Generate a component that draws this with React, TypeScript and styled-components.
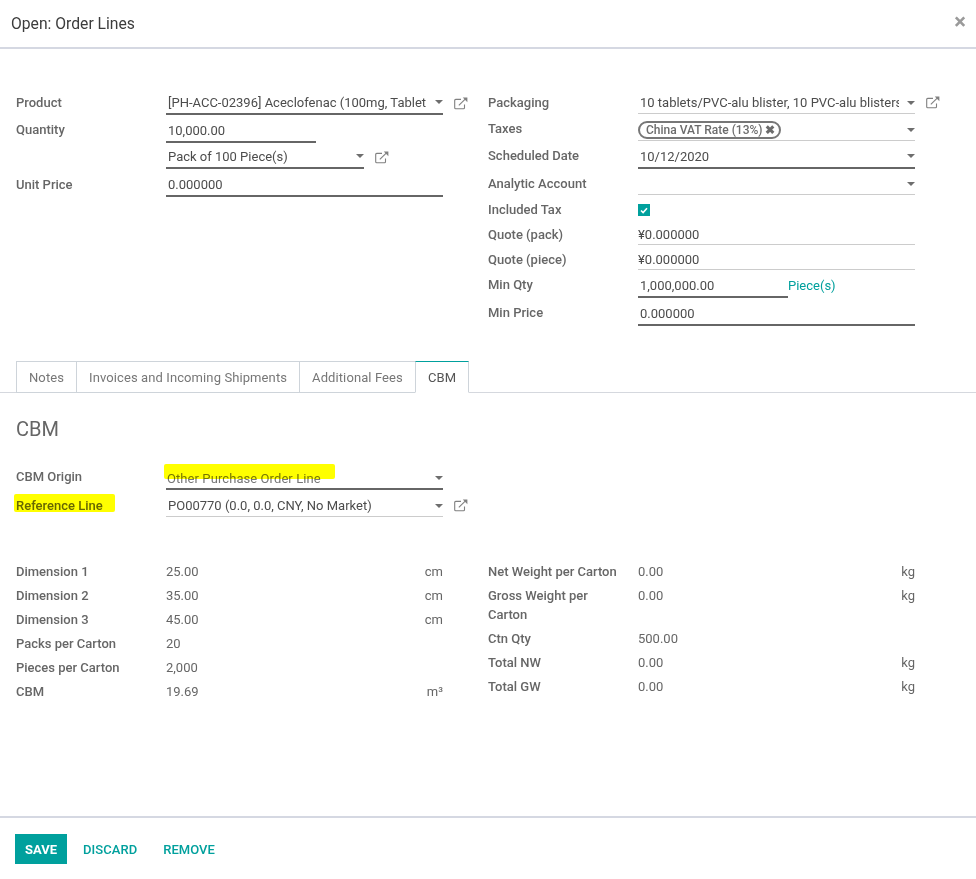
import React from 'react';
import styled, { createGlobalStyle } from 'styled-components';

const GlobalStyle = createGlobalStyle`
  html, body {
    margin: 0;
    padding: 0;
    background: #fff;
  }
  body {
    font-family: Roboto, 'Noto Sans', sans-serif;
    font-size: 13px;
    color: #666;
  }
`;

const Dialog = styled.div`
  width: 976px;
  height: 879px;
  display: flex;
  flex-direction: column;
  overflow: hidden;
`;

const Header = styled.header`
  height: 49px;
  flex-shrink: 0;
  box-sizing: border-box;
  display: flex;
  align-items: center;
  justify-content: space-between;
  padding: 0 10px 0 11px;
  border-bottom: 2px solid #d5d8e2;
`;

const Title = styled.h4`
  margin: 0;
  font-size: 15.7px;
  font-weight: 400;
  color: #3c3c3c;
`;

const Close = styled.span`
  font-size: 22px;
  font-weight: 700;
  line-height: 1;
  margin-bottom: 3px;
  color: #9a9a9a;
`;

const Body = styled.div`
  flex: 1;
  display: flex;
  flex-direction: column;
`;

const Columns = styled.div<{ $top: number; $height: number }>`
  display: grid;
  grid-template-columns: 427px 427px;
  column-gap: 45px;
  padding: ${(p) => p.$top}px 0 0 16px;
  height: ${(p) => p.$height}px;
  box-sizing: border-box;
  align-items: start;
`;

const Group = styled.div`
  display: flex;
  flex-direction: column;
`;

const Row = styled.div<{ $h: number }>`
  height: ${(p) => p.$h}px;
  display: grid;
  grid-template-columns: 150px 277px;
  align-items: end;
`;

const Label = styled.label<{ $lift?: number }>`
  font-weight: 500;
  line-height: 18px;
  margin-bottom: ${(p) => p.$lift ?? 4}px;
  color: #666;
  position: relative;
`;

const FieldCell = styled.div<{ $width?: number }>`
  position: relative;
  width: ${(p) => (p.$width ? `${p.$width}px` : '100%')};
  display: flex;
  align-items: flex-end;
`;

const Field = styled.div<{ $strong?: boolean; $inset?: number }>`
  width: 100%;
  height: 22px;
  box-sizing: border-box;
  display: flex;
  align-items: center;
  padding: 0 0 ${(p) => (p.$strong ? 2 : 0)}px ${(p) => p.$inset ?? 2}px;
  border-bottom: ${(p) => (p.$strong ? '2px solid #666' : '1px solid #ccc')};
  color: #4c4c4c;
  white-space: nowrap;
  overflow: hidden;
`;

const AmountField = styled(Field)`
  padding-top: 2px;
`;

const OriginField = styled(Field)`
  padding-top: 2px;
  color: #777;
  letter-spacing: 0.08px;
`;

const FieldText = styled.span`
  flex: 1;
  overflow: hidden;
  min-width: 0;
`;

const Caret = styled.span`
  width: 0;
  height: 0;
  flex-shrink: 0;
  margin-left: 8px;
  border-left: 4px solid transparent;
  border-right: 4px solid transparent;
  border-top: 4px solid #6e6e6e;
`;

const OpenLink = styled.svg`
  position: absolute;
  left: 100%;
  bottom: 5px;
  margin-left: 11px;
  width: 14px;
  height: 13px;
  color: #808080;
`;

const Tag = styled.span`
  display: inline-flex;
  align-items: center;
  gap: 2px;
  height: 18px;
  box-sizing: border-box;
  padding: 0 4px 0 6px;
  border: 2px solid #777;
  border-radius: 9px;
  font-size: 12px;
  font-weight: 500;
  color: #6c6c6c;
`;

const TagRemove = styled.span`
  font-size: 12px;
  line-height: 1;
  font-weight: 700;
`;

const CheckCell = styled.div`
  height: 22px;
  display: flex;
  align-items: center;
`;

const Check = styled.span`
  width: 12px;
  height: 12px;
  margin-top: 2px;
  background: #00a09d;
  display: flex;
  align-items: center;
  justify-content: center;
`;

const UnitLink = styled.span`
  position: absolute;
  left: 150px;
  bottom: 5px;
  color: #00a09d;
`;

const TabBar = styled.div`
  display: flex;
  height: 32px;
  flex-shrink: 0;
  box-sizing: border-box;
  padding-left: 16px;
  border-bottom: 1px solid #d5d8de;
`;

const Tab = styled.div<{ $active?: boolean }>`
  height: 32px;
  box-sizing: border-box;
  padding: 0 12px;
  display: flex;
  align-items: center;
  letter-spacing: 0.1px;
  border: 1px solid #ced4da;
  margin-left: -1px;
  border-top-color: ${(p) => (p.$active ? '#00a09d' : '#ced4da')};
  border-bottom-color: ${(p) => (p.$active ? '#fff' : '#ced4da')};
  background: #fff;
  color: ${(p) => (p.$active ? '#555' : '#777')};
  &:first-child {
    margin-left: 0;
  }
`;

const SectionTitle = styled.h3`
  margin: 24px 0 0 16px;
  font-size: 20px;
  line-height: 24px;
  font-weight: 400;
  color: #666;
`;

const ReferenceGroup = styled(Group)`
  padding: 24px 0 0 16px;
  width: 427px;
`;

const Highlight = styled.span<{ $l: number; $t: number; $w: number; $h: number }>`
  position: absolute;
  left: ${(p) => p.$l}px;
  top: ${(p) => p.$t}px;
  width: ${(p) => p.$w}px;
  height: ${(p) => p.$h}px;
  background: #ffff00;
  mix-blend-mode: multiply;
  pointer-events: none;
  border-radius: 2px;
`;

const ReadRow = styled.div`
  min-height: 24px;
  display: grid;
  grid-template-columns: 150px 1fr auto;
  align-items: start;
`;

const ReadLabel = styled.span`
  font-weight: 500;
  line-height: 19px;
  padding: 2px 16px 3px 0;
  color: #666;
`;

const ReadValue = styled.span`
  line-height: 19px;
  padding-top: 2px;
  color: #666;
`;

const Footer = styled.footer`
  margin-top: auto;
  height: 63px;
  flex-shrink: 0;
  box-sizing: border-box;
  display: flex;
  align-items: flex-start;
  padding: 16px 0 0 15px;
  border-top: 2px solid #d5d8e2;
`;

const SaveButton = styled.button`
  width: 52px;
  height: 30px;
  border: 0;
  padding: 0;
  background: #00a09d;
  color: #fff;
  font: 700 13px Roboto, sans-serif;
`;

const LinkButton = styled.button`
  height: 30px;
  border: 0;
  padding: 0;
  margin: 0 10px 0 16px;
  background: none;
  color: #00a09d;
  letter-spacing: 0.05px;
  font: 500 13px Roboto, sans-serif;
`;

const ExternalIcon = () => (
  <OpenLink viewBox="0 0 14 13" fill="none" stroke="currentColor" strokeWidth="1.1">
    <path d="M10.5 7.5v3.2a1 1 0 0 1-1 1H1.7a1 1 0 0 1-1-1V3.4a1 1 0 0 1 1-1H7" />
    <path d="M4.8 8.4 12 1.4" />
    <path d="M8.8.6h4.6v4.6z" fill="currentColor" stroke="none" />
  </OpenLink>
);

const leftDetails = [
  ['Dimension 1', '25.00', 'cm'],
  ['Dimension 2', '35.00', 'cm'],
  ['Dimension 3', '45.00', 'cm'],
  ['Packs per Carton', '20', ''],
  ['Pieces per Carton', '2,000', ''],
  ['CBM', '19.69', 'm³'],
];

const rightDetails = [
  ['Net Weight per Carton', '0.00', 'kg'],
  ['Gross Weight per Carton', '0.00', 'kg'],
  ['Ctn Qty', '500.00', ''],
  ['Total NW', '0.00', 'kg'],
  ['Total GW', '0.00', 'kg'],
];

const App: React.FC = () => (
  <Dialog>
    <GlobalStyle />
    <Header>
      <Title>Open: Order Lines</Title>
      <Close>×</Close>
    </Header>
    <Body>
      <Columns $top={21} $height={312}>
        <Group>
          <Row $h={45}>
            <Label $lift={3}>Product</Label>
            <FieldCell>
              <Field $strong>
                <FieldText>[PH-ACC-02396] Aceclofenac (100mg, Tablet</FieldText>
                <Caret />
              </Field>
              <ExternalIcon />
            </FieldCell>
          </Row>
          <Row $h={28}>
            <Label>Quantity</Label>
            <FieldCell $width={150}>
              <Field $strong>10,000.00</Field>
            </FieldCell>
          </Row>
          <Row $h={26}>
            <span />
            <FieldCell $width={198}>
              <Field $strong>
                <FieldText>Pack of 100 Piece(s)</FieldText>
                <Caret />
              </Field>
              <ExternalIcon />
            </FieldCell>
          </Row>
          <Row $h={28}>
            <Label $lift={3}>Unit Price</Label>
            <FieldCell>
              <Field $strong>0.000000</Field>
            </FieldCell>
          </Row>
        </Group>
        <Group>
          <Row $h={44}>
            <Label $lift={2}>Packaging</Label>
            <FieldCell>
              <Field>
                <FieldText>10 tablets/PVC-alu blister, 10 PVC-alu blisters/box</FieldText>
                <Caret />
              </Field>
              <ExternalIcon />
            </FieldCell>
          </Row>
          <Row $h={27}>
            <Label $lift={3}>Taxes</Label>
            <FieldCell>
              <Field $inset={0}>
                <FieldText>
                  <Tag>
                    China VAT Rate (13%) <TagRemove>✖</TagRemove>
                  </Tag>
                </FieldText>
                <Caret />
              </Field>
            </FieldCell>
          </Row>
          <Row $h={28}>
            <Label>Scheduled Date</Label>
            <FieldCell>
              <Field $strong>
                <FieldText>10/12/2020</FieldText>
                <Caret />
              </Field>
            </FieldCell>
          </Row>
          <Row $h={26}>
            <Label $lift={2}>Analytic Account</Label>
            <FieldCell>
              <Field>
                <FieldText />
                <Caret />
              </Field>
            </FieldCell>
          </Row>
          <Row $h={25}>
            <Label $lift={1}>Included Tax</Label>
            <CheckCell>
              <Check>
                <svg width="8" height="7" viewBox="0 0 8 7" fill="none" stroke="#fff" strokeWidth="1.6">
                  <path d="M1 3.5 3.1 5.5 7 1.2" />
                </svg>
              </Check>
            </CheckCell>
          </Row>
          <Row $h={25}>
            <Label $lift={1}>Quote (pack)</Label>
            <FieldCell>
              <AmountField $inset={0}>¥0.000000</AmountField>
            </FieldCell>
          </Row>
          <Row $h={25}>
            <Label $lift={1}>Quote (piece)</Label>
            <FieldCell>
              <AmountField $inset={0}>¥0.000000</AmountField>
            </FieldCell>
          </Row>
          <Row $h={28}>
            <Label>Min Qty</Label>
            <FieldCell>
              <FieldCell $width={150}>
                <Field $strong>1,000,000.00</Field>
              </FieldCell>
              <UnitLink>Piece(s)</UnitLink>
            </FieldCell>
          </Row>
          <Row $h={28}>
            <Label>Min Price</Label>
            <FieldCell>
              <Field $strong>0.000000</Field>
            </FieldCell>
          </Row>
        </Group>
      </Columns>
      <TabBar>
        <Tab>Notes</Tab>
        <Tab>Invoices and Incoming Shipments</Tab>
        <Tab>Additional Fees</Tab>
        <Tab $active>CBM</Tab>
      </TabBar>
      <SectionTitle>CBM</SectionTitle>
      <ReferenceGroup>
        <Row $h={25}>
          <Label>CBM Origin</Label>
          <FieldCell>
            <OriginField $strong $inset={1}>
              <FieldText>Other Purchase Order Line</FieldText>
              <Caret />
            </OriginField>
            <Highlight $l={-2} $t={-4} $w={171} $h={15} />
          </FieldCell>
        </Row>
        <Row $h={27}>
          <Label $lift={2}>
            Reference Line
            <Highlight $l={-2} $t={-3} $w={101} $h={18} />
          </Label>
          <FieldCell>
            <Field>
              <FieldText>PO00770 (0.0, 0.0, CNY, No Market)</FieldText>
              <Caret />
            </Field>
            <ExternalIcon />
          </FieldCell>
        </Row>
      </ReferenceGroup>
      <Columns $top={43} $height={200}>
        <Group>
          {leftDetails.map(([label, value, unit]) => (
            <ReadRow key={label}>
              <ReadLabel>{label}</ReadLabel>
              <ReadValue>{value}</ReadValue>
              <ReadValue>{unit}</ReadValue>
            </ReadRow>
          ))}
        </Group>
        <Group>
          {rightDetails.map(([label, value, unit]) => (
            <ReadRow key={label}>
              <ReadLabel>{label}</ReadLabel>
              <ReadValue>{value}</ReadValue>
              <ReadValue>{unit}</ReadValue>
            </ReadRow>
          ))}
        </Group>
      </Columns>
    </Body>
    <Footer>
      <SaveButton>SAVE</SaveButton>
      <LinkButton>DISCARD</LinkButton>
      <LinkButton>REMOVE</LinkButton>
    </Footer>
  </Dialog>
);

export default App;
